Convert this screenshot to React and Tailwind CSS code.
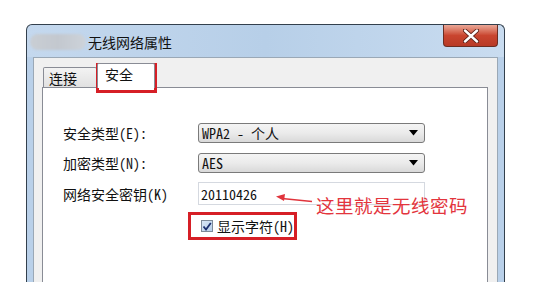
import React from "react";

const dlgFont = {
  fontFamily:
    '"Noto Sans Mono CJK SC", "Noto Sans CJK SC", "Liberation Mono", monospace',
};

function Dropdown({ value }) {
  return (
    <div className="flex h-[20px] w-[227px] items-center justify-between rounded-[3px] border border-[#7a7a7a] bg-gradient-to-b from-[#f4f4f4] via-[#ebebeb] to-[#d9d9d9] pl-[3px] pr-[6px] text-[14px] leading-none text-[#111]">
      <span>{value}</span>
      <svg width="9" height="6" viewBox="0 0 9 6">
        <path d="M0 0 L9 0 L4.5 5.5 Z" fill="#000" />
      </svg>
    </div>
  );
}

export default function App() {
  return (
    <div className="relative h-[308px] w-[537px] overflow-hidden bg-white" style={dlgFont}>
      <div className="pl-[26px] pt-[24px]">
        <div className="flex h-[258px] w-[479px] flex-col overflow-hidden rounded-t-[6px] border border-b-0 border-[#33404d] bg-gradient-to-r from-[#c4d8ee] via-[#b7cfe8] to-[#c9dcf0]">
          {/* title bar */}
          <div className="flex h-[32px] shrink-0 items-start">
            <div className="ml-[3px] mt-[9px] h-[16px] w-[56px] rounded-full bg-gradient-to-r from-[#c9ced4] via-[#c3c8cf] to-[#cdd3da] blur-[1px]" />
            <div
              className="ml-[2px] mt-[8px] text-[14px] leading-[18px] text-[#111]"
              style={{ fontFamily: '"Noto Sans CJK SC", sans-serif' }}
            >
              无线网络属性
            </div>
            <div className="flex-1" />
            <div className="mr-[6px] flex h-[22px] w-[55px] items-center justify-center rounded-b-[4px] border border-t-0 border-[#6b2d22] bg-gradient-to-b from-[#e9a797] via-[#c9452f] to-[#b83a26]">
              <svg width="16" height="14" viewBox="0 0 16 14">
                <path
                  d="M2 1.5 L14 12.5 M14 1.5 L2 12.5"
                  stroke="#5a1f16"
                  strokeWidth="4.2"
                  strokeLinecap="round"
                />
                <path
                  d="M2 1.5 L14 12.5 M14 1.5 L2 12.5"
                  stroke="#ffffff"
                  strokeWidth="2.4"
                  strokeLinecap="round"
                />
              </svg>
            </div>
          </div>
          {/* body */}
          <div className="flex flex-1">
            <div className="w-[6px] bg-[#b9d0e9]" />
            <div className="flex w-[465px] flex-col border border-b-0 border-[#9aa8b6] bg-[#f0f0f0] pl-[8px] pr-[9px] pt-[5px]">
              {/* tabs */}
              <div className="flex h-[24px] items-end">
                <div className="ml-[1px] flex h-[20px] w-[54px] items-center rounded-t-[2px] border border-b-0 border-[#898c95] bg-gradient-to-b from-[#f3f3f3] to-[#e1e1e1] pl-[5px] text-[14px] leading-none text-[#111]">
                  连接
                </div>
                <div className="relative z-10 -mb-[1px] flex h-[25px] w-[58px] items-start rounded-t-[2px] border border-b-0 border-[#898c95] bg-white pl-[7px] pt-[3px] text-[14px] leading-none text-[#111]">
                  安全
                </div>
              </div>
              {/* panel */}
              <div className="flex-1 border border-b-0 border-[#898c95] bg-white pl-[20px] pt-[35px] text-[14px] leading-none text-[#111]">
                <div className="flex items-center">
                  <div className="w-[135px]">安全类型(E):</div>
                  <Dropdown value="WPA2 - 个人" />
                </div>
                <div className="mt-[10px] flex items-center">
                  <div className="w-[135px]">加密类型(N):</div>
                  <Dropdown value="AES" />
                </div>
                <div className="mt-[9px] flex items-center">
                  <div className="w-[135px]">网络安全密钥(K)</div>
                  <div className="flex h-[23px] w-[227px] items-center border border-[#d5d9e0] bg-white pl-[2px]">
                    20110426
                  </div>
                </div>
                <div className="ml-[125px] mt-[7px] flex h-[28px] w-[109px] items-center border-[3px] border-[#d61f26] pl-[10px]">
                  <div className="flex h-[12px] w-[12px] items-center justify-center border border-[#7d8a98] bg-gradient-to-br from-[#d8e6f5] to-[#b7cfe9]">
                    <svg width="10" height="9" viewBox="0 0 10 9">
                      <path
                        d="M1.5 4.5 L4 7.5 L8.8 1"
                        stroke="#1b2f6e"
                        strokeWidth="1.8"
                        fill="none"
                      />
                    </svg>
                  </div>
                  <span className="ml-[4px]">显示字符(H)</span>
                </div>
              </div>
            </div>
            <div className="w-[6px] bg-[#b9d0e9]" />
          </div>
        </div>
      </div>

      {/* red highlight around tab */}
      <div className="absolute left-[96px] top-[63px] h-[30px] w-[61px] border-[3px] border-[#d61f26]" />

      {/* annotation arrow */}
      <svg className="absolute left-[272px] top-[190px]" width="46" height="18" viewBox="0 0 46 18">
        <path d="M10 8.5 L40 11.5" stroke="#e0343c" strokeWidth="1.6" fill="none" />
        <path d="M4 6.5 L13 4 L12 11 Z" fill="#e0343c" />
      </svg>
      <div
        className="absolute left-[316px] top-[196px] text-[18.5px] leading-none tracking-[0.5px] text-[#e3353d]"
        style={{ fontFamily: '"Noto Sans CJK SC", sans-serif' }}
      >
        这里就是无线密码
      </div>
    </div>
  );
}
